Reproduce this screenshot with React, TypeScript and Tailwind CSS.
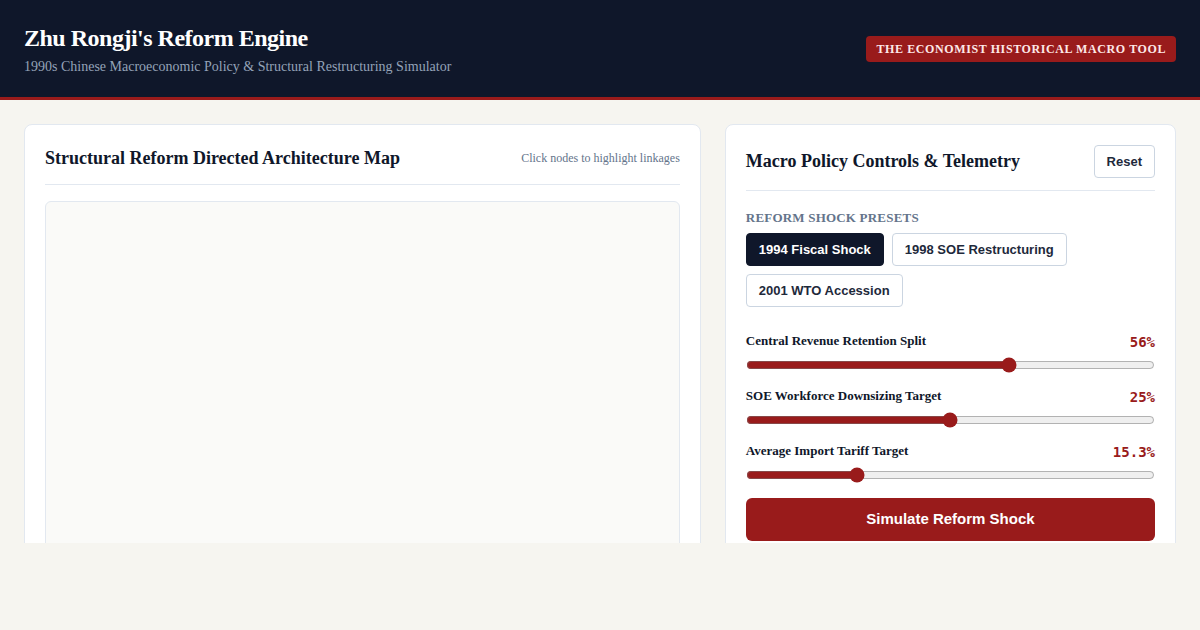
import React, { useState } from "react";

const serif = { fontFamily: '"Liberation Serif", "Times New Roman", serif' };
const sans = { fontFamily: '"Liberation Sans", Arial, sans-serif' };
const mono = { fontFamily: '"DejaVu Sans Mono", "Liberation Mono", monospace' };

type SliderDef = {
  label: string;
  min: number;
  max: number;
  step: number;
  value: number;
  fmt: (v: number) => string;
};

const initialSliders: SliderDef[] = [
  { label: "Central Revenue Retention Split", min: 19, max: 76, step: 1, value: 56, fmt: (v) => `${v}%` },
  { label: "SOE Workforce Downsizing Target", min: 0, max: 50, step: 1, value: 25, fmt: (v) => `${v}%` },
  { label: "Average Import Tariff Target", min: 5, max: 44.3, step: 0.1, value: 15.3, fmt: (v) => `${v.toFixed(1)}%` },
];

const presets = ["1994 Fiscal Shock", "1998 SOE Restructuring", "2001 WTO Accession"];

export default function App() {
  const [sliders, setSliders] = useState(initialSliders);
  const [active, setActive] = useState(0);

  return (
    <div className="min-h-[630px] bg-[#f6f5f0]" style={serif}>
      <header className="flex items-center justify-between border-b-[3px] border-[#991b1b] bg-[#0f172a] px-6 pt-[22px] pb-[20px]">
        <div>
          <h1 className="text-[24px] leading-[32px] font-bold tracking-[-0.5px] text-white">Zhu Rongji's Reform Engine</h1>
          <p className="mt-[3px] text-[14px] leading-[20px] text-[#94a3b8]">
            1990s Chinese Macroeconomic Policy &amp; Structural Restructuring Simulator
          </p>
        </div>
        <span className="mb-[1px] rounded-[4px] bg-[#991b1b] px-[10px] py-[5px] text-[12px] leading-[16px] font-bold tracking-[0.6px] text-[#fde8e8] uppercase">
          The Economist Historical Macro Tool
        </span>
      </header>

      <main className="h-[443px] overflow-hidden px-6 pt-6">
        <div className="grid grid-cols-[3fr_2fr] gap-6">
          {/* Architecture map panel */}
          <section className="rounded-[8px] border border-[#e2e8f0] bg-white p-5">
            <div className="flex items-center justify-between border-b border-[#e2e8f0] pt-[1px] pb-[14px]">
              <h2 className="text-[18px] leading-[24px] font-bold text-[#0f172a]">Structural Reform Directed Architecture Map</h2>
              <span className="text-[12px] text-[#64748b]">Click nodes to highlight linkages</span>
            </div>
            <div className="mt-4 h-[480px] rounded-[6px] border border-[#e2e8f0] bg-[#fafaf8]" />
          </section>

          {/* Controls panel */}
          <section className="rounded-[8px] border border-[#e2e8f0] bg-white p-5">
            <div className="flex items-center justify-between border-b border-[#e2e8f0] pb-3">
              <h2 className="-mt-[1px] text-[18px] leading-[24px] font-bold text-[#0f172a]">Macro Policy Controls &amp; Telemetry</h2>
              <button
                className="h-[33px] rounded-[4px] border border-[#cbd5e1] bg-white px-3 text-[13px] font-bold text-[#1e293b]"
                style={sans}
                onClick={() => setSliders(initialSliders)}
              >
                Reset
              </button>
            </div>

            <div className="mt-[18px] text-[13px] leading-[18px] font-bold tracking-[0.2px] text-[#64748b] uppercase">
              Reform Shock Presets
            </div>
            <div className="mt-[6px] flex flex-wrap gap-2" style={sans}>
              {presets.map((p, i) => (
                <button
                  key={p}
                  onClick={() => setActive(i)}
                  className={
                    i === active
                      ? "h-[33px] rounded-[4px] border border-[#0f172a] bg-[#0f172a] px-3 text-[13px] font-bold text-white"
                      : "h-[33px] rounded-[4px] border border-[#cbd5e1] bg-white px-3 text-[13px] font-bold text-[#1e293b]"
                  }
                >
                  {p}
                </button>
              ))}
            </div>

            <div className="mt-[26px] flex flex-col gap-[15px]">
              {sliders.map((s, i) => (
                <div key={s.label}>
                  <div className="flex items-end justify-between">
                    <span className="text-[13px] leading-[16px] font-bold text-[#0f172a]">{s.label}</span>
                    <span className="translate-y-[1px] text-[14px] leading-[16px] font-bold text-[#991b1b]" style={mono}>
                      {s.fmt(s.value)}
                    </span>
                  </div>
                  <input
                    type="range"
                    min={s.min}
                    max={s.max}
                    step={s.step}
                    value={s.value}
                    onChange={(e) => {
                      const v = parseFloat(e.target.value);
                      setSliders((prev) => prev.map((x, j) => (j === i ? { ...x, value: v } : x)));
                    }}
                    className="mt-[8px] block h-4 w-full accent-[#991b1b]"
                  />
                </div>
              ))}
            </div>

            <button
              className="mt-[15px] h-[43px] w-full rounded-[6px] bg-[#991b1b] text-[15px] font-bold text-white"
              style={sans}
            >
              Simulate Reform Shock
            </button>
          </section>
        </div>
      </main>
    </div>
  );
}
